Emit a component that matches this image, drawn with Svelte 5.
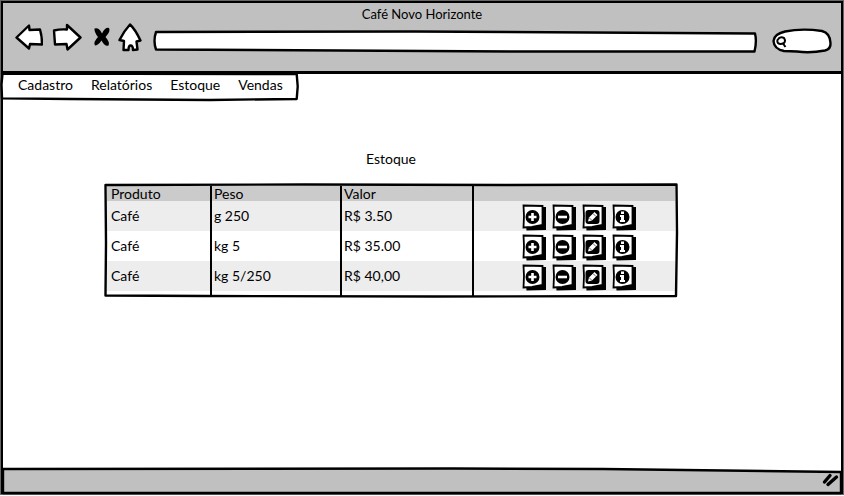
<script>
  const menu = ['Cadastro', 'Relatórios', 'Estoque', 'Vendas'];
  const rows = [
    { produto: 'Café', peso: 'g 250', valor: 'R$ 3.50' },
    { produto: 'Café', peso: 'kg 5', valor: 'R$ 35.00' },
    { produto: 'Café', peso: 'kg 5/250', valor: 'R$ 40,00' }
  ];
  const actions = [
    { icon: 'plus', label: 'Adicionar' },
    { icon: 'minus', label: 'Remover' },
    { icon: 'edit', label: 'Editar' },
    { icon: 'info', label: 'Informações' }
  ];
  let address = $state('');
  let query = $state('');
</script>

{#snippet sketch(w, h, d, fill)}
  <svg class="sketch" viewBox="0 0 {w} {h}" preserveAspectRatio="none" aria-hidden="true">
    <path {d} {fill} stroke="#000" stroke-width="2.4" stroke-linejoin="round" vector-effect="non-scaling-stroke" />
  </svg>
{/snippet}

<div class="window">
  <header>
    <div class="title">Café Novo Horizonte</div>
    <div class="toolbar">
      <button class="nav back" aria-label="Voltar">
        <svg width="28" height="26" viewBox="0 0 28 26"><path d="M1.5 13.5 L14 1.5 L14.5 6 L25 5.500 Q27 12 27 20.500 L15 20 L14 24.500 Z" /></svg>
      </button>
      <button class="nav forward" aria-label="Avançar">
        <svg width="30" height="28" viewBox="0 0 30 28"><path d="M2 7.500 Q8 6 15 6.500 L15 2 L28.500 14.500 L15.500 26.500 L14.500 21 L3 21.500 Z" /></svg>
      </button>
      <button class="nav stop" aria-label="Parar">
        <svg width="18" height="20" viewBox="0 0 18 20"><path class="solid" d="M1.500 1.500 Q6 0 9 6.500 Q12 0 16 1 Q18 4 12.500 10 Q17 15 15.500 18.500 Q12 20 8.500 13.500 Q5 18.500 2 18.500 Q0 15 5 10 Q1 5 1.500 1.500 Z" /></svg>
      </button>
      <button class="nav home" aria-label="Início">
        <svg width="24" height="29" viewBox="0 0 24 29"><path d="M12 1.500 Q17 6 22.500 17.500 L18.500 18.500 L19.500 26.500 L15 27 Q15 22.500 12.500 22.500 Q10.500 22.500 10.500 27 L5.500 27 L6 18 L1.500 17 Q6 8 12 1.500 Z" /></svg>
      </button>
      <div class="address">
        {@render sketch(602, 23, 'M3 2 L260 1.500 L600 3.500 Q602 11 599.500 21.500 L360 21.500 L3 19.500 Q0 11 3 2 Z', '#fff')}
        <input type="text" aria-label="Endereço" bind:value={address} />
      </div>
      <div class="search">
        {@render sketch(60, 26, 'M13 3.500 Q30 0 50 3 Q58 5 58.500 15 Q59 21 53 22.500 Q38 25.500 25 23.500 L12 23 Q2 21 1.500 13 Q2 6 13 3.500 Z', '#fff')}
        <svg class="lens" width="11" height="12" viewBox="0 0 11 12" aria-hidden="true"><path d="M1.500 4 Q4 0 8 2 Q10 5 8 7 Q4 9 2 7 Q1 6 1.500 4 Z M7 7.500 L9.500 11" /></svg>
        <input type="search" aria-label="Pesquisar" bind:value={query} />
      </div>
    </div>
  </header>

  <nav class="menu">
    {@render sketch(299, 28, 'M2.500 1.500 L297 2 L298 14 L297 26 L210 27 L70 26 L2 25.500 L1.500 12 Z', '#fff')}
    {#each menu as item}
      <a href="#{item.toLowerCase()}">{item}</a>
    {/each}
  </nav>

  <main>
    <h1>Estoque</h1>
    <div class="grid">
      <table>
        <colgroup><col class="c1" /><col class="c2" /><col class="c3" /><col /></colgroup>
        <thead>
          <tr><th>Produto</th><th>Peso</th><th>Valor</th><th aria-label="Ações"></th></tr>
        </thead>
        <tbody>
          {#each rows as row}
            <tr>
              <td>{row.produto}</td>
              <td>{row.peso}</td>
              <td>{row.valor}</td>
              <td>
                <div class="actions">
                  {#each actions as action}
                    <button aria-label={action.label}>
                      <svg width="25" height="27" viewBox="0 0 25 27">
                        <path d="M4 20 L4.500 26.500 L24 26 L24 3 L19 3 Z" />
                        <path d="M1.500 1.500 L20.500 2 L20.500 21 L10 23 L1.500 23.500 L2 12 Z" fill="#fff" stroke="#000" stroke-width="1.800" />
                        {#if action.icon === 'edit'}
                          <rect x="3.500" y="6" width="14" height="14" rx="3" />
                          <path d="M6 17.500 L7 13.500 L12.500 8 L15.500 11 L10 16.500 Z" fill="#fff" />
                          <path d="M11 9.500 L14 12.500 M7 13.500 L10 16.500" fill="none" stroke="#000" stroke-width=".6" />
                        {:else}
                          <circle cx="10.500" cy="13" r="7" />
                          {#if action.icon === 'plus'}
                            <path d="M10.500 9 V17 M6.500 13 H14.500" stroke="#fff" stroke-width="2.600" />
                          {:else if action.icon === 'minus'}
                            <path d="M6 13 H15" stroke="#fff" stroke-width="2.600" />
                          {:else}
                            <path d="M9 7.500 H12 V10 H9 Z M8 11 H12 V16 H13 V18 H8 V16 H9 V13 H8 Z" fill="#fff" />
                          {/if}
                        {/if}
                      </svg>
                    </button>
                  {/each}
                </div>
              </td>
            </tr>
          {/each}
        </tbody>
        <tfoot aria-hidden="true">
          <tr><td></td><td></td><td></td><td></td></tr>
        </tfoot>
      </table>
      {@render sketch(573, 115, 'M1.500 2 L200 1.500 L400 2 L571.500 1.500 L572 50 L571 113 L330 113.500 L100 113 L1.500 112.500 L2 60 Z', 'none')}
    </div>
  </main>

  <footer>
    {@render sketch(838, 25, 'M0 2 L450 1.500 L600 2 L838 5 V26 H0 Z', '#c0c0c0')}
    <svg class="grip" width="17" height="14" viewBox="0 0 17 14" aria-hidden="true"><path d="M2.500 9 L8 2.500 M6 11.500 L14.500 4" /></svg>
  </footer>
</div>

<style>
  :global(body) { margin: 0; background: #fff; }
  :global(#app) { display: flow-root; }
  .window {
    box-sizing: border-box;
    min-height: calc(100vh - 3px);
    display: flex;
    flex-direction: column;
    margin: 1px 1px 2px;
    border: 2px solid #000;
    box-shadow: 0 0 0 1px #666;
    font: 14px/16px Lato, "Open Sans", sans-serif;
    color: #000;
  }
  button, input { font: inherit; border: 0; background: none; padding: 0; margin: 0; }
  button { display: block; cursor: pointer; }
  svg { display: block; }
  .sketch { position: absolute; inset: 0; width: 100%; height: 100%; pointer-events: none; overflow: visible; }

  header { background: #c0c0c0; border-bottom: 3px solid #000; height: 68px; }
  .title { text-align: center; padding-top: 3px; font-size: 13px; }
  .toolbar { display: flex; align-items: center; height: 34px; margin-top: -2px; padding: 0 9px 0 12px; }
  .nav path { fill: #fff; stroke: #000; stroke-width: 2.4; stroke-linejoin: round; }
  .nav path.solid { fill: #000; stroke: none; }
  .forward { margin-left: 9px; }
  .stop { margin-left: 11px; }
  .home { margin-left: 7px; }
  .address { position: relative; flex: 1; height: 23px; margin: 8px 15px 0 11px; }
  .search { position: relative; width: 60px; height: 26px; margin-top: 8px; }
  .address input, .search input { position: relative; box-sizing: border-box; width: 100%; height: 100%; padding: 0 8px; outline: 0; appearance: none; }
  .search input { padding-left: 18px; }
  .lens { position: absolute; left: 4px; top: 8px; fill: none; stroke: #000; stroke-width: 2px; }

  .menu { position: relative; align-self: flex-start; display: flex; gap: 18px; height: 29px; margin: -2px 0 0 -3px; padding: 0 16px 3px 18px; box-sizing: border-box; align-items: center; }
  .menu a { position: relative; color: inherit; text-decoration: none; }

  main { flex: 1; padding: 50px 163px 20px 101px; }
  h1 { margin: 0 0 16px; font: inherit; text-align: center; }
  .grid { position: relative; padding: 3px 3px 2px; }
  table { width: 100%; table-layout: fixed; border-collapse: separate; border-spacing: 0; }
  .c1 { width: 105px; }
  .c2 { width: 130px; }
  .c3 { width: 132px; }
  th, td { padding: 0 2px; text-align: left; font-weight: normal; border-right: 2px solid #000; }
  th:first-child, td:first-child { padding-left: 4px; }
  th:last-child, td:last-child { border-right: 0; }
  th { height: 15px; line-height: 14px; background: #cbcbcb; }
  td { height: 30px; }
  tfoot td { height: 5px; }
  tbody tr:nth-child(odd) td { background: #ededed; }
  .actions { display: flex; justify-content: center; gap: 5px; padding: 3px 0 0 9px; }

  footer { position: relative; display: flex; justify-content: flex-end; align-items: center; height: 25px; padding-right: 2px; }
  .grip { position: relative; fill: none; stroke: #000; stroke-width: 3.4; stroke-linecap: round; }
</style>
